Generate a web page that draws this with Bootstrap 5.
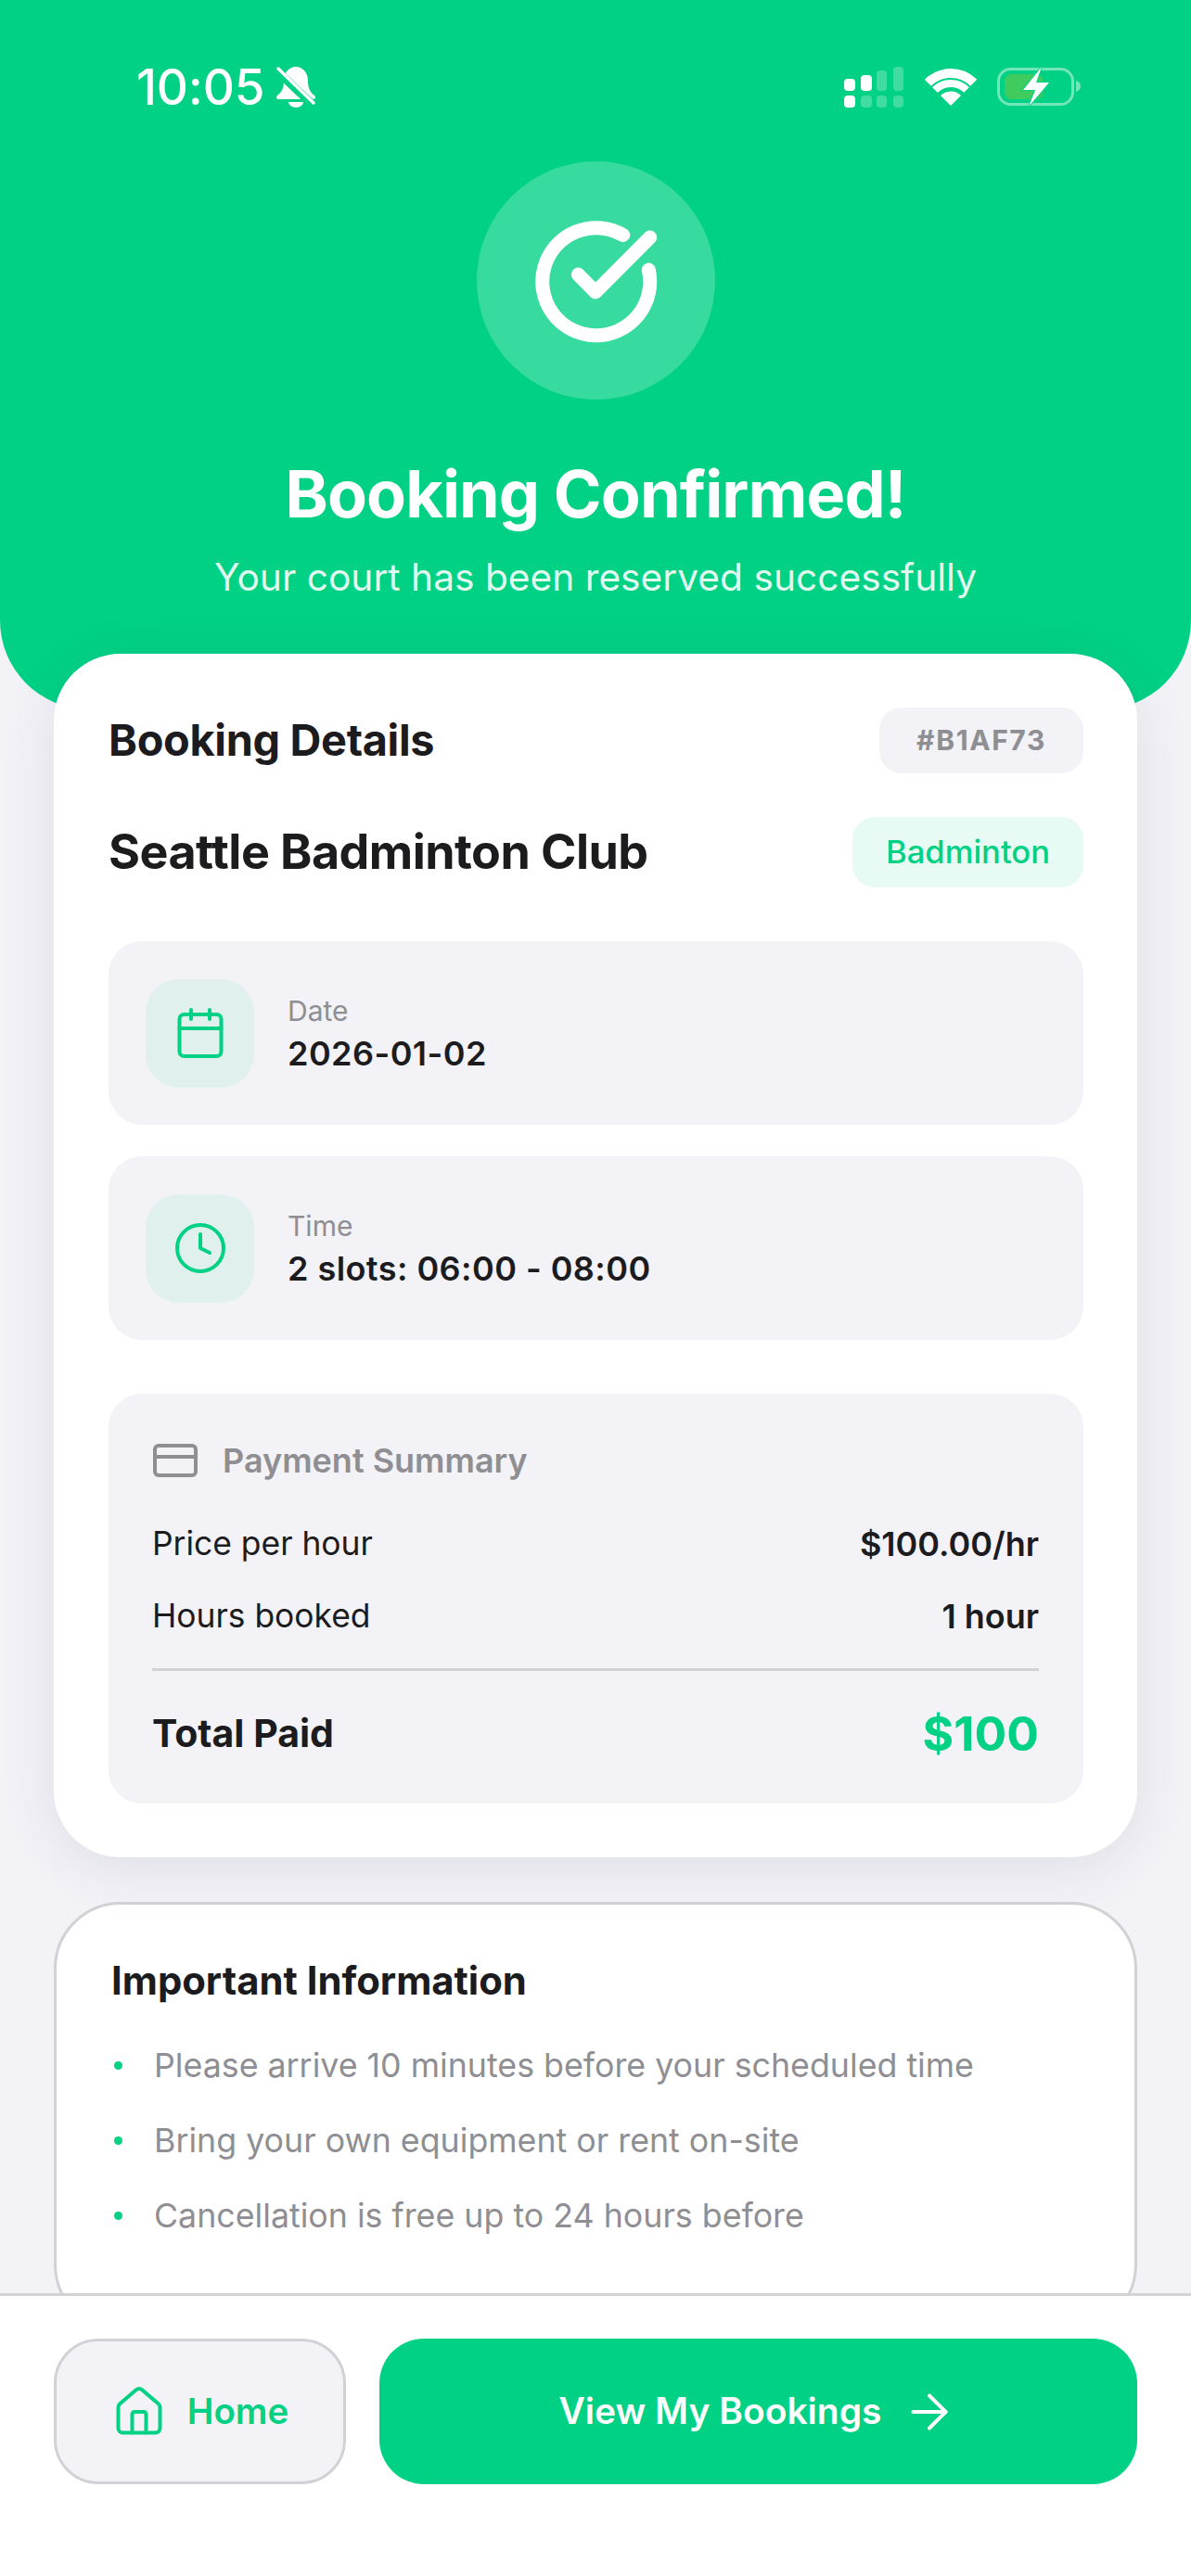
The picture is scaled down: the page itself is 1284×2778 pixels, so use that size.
<!DOCTYPE html>
<html lang="en">
<head>
<meta charset="utf-8">
<title>Booking Confirmed</title>
<link href="https://cdn.jsdelivr.net/npm/bootstrap@5.3.0/dist/css/bootstrap.min.css" rel="stylesheet">
<style>
:root{--g:#00D185;--ink:#1C1C1E;--mute:#8E8E93;--soft:#F2F2F7;--line:#D1D1D6}
html,body{height:100%}
body{font-family:Inter,"Liberation Sans",sans-serif;background:var(--soft);color:var(--ink);overflow:hidden}
.shell{height:2778px}
.scroller{min-height:0;overflow:hidden}
.hero{height:765px;background:var(--g);border-radius:0 0 96px 96px;color:#fff}
.statusline{height:132px;margin-top:28px;padding:0 117px 0 147px}
.clock-text{font-size:53px;font-weight:500;line-height:1;letter-spacing:-.2px}
.bell-ic{margin-left:12px}
.sig-gap{margin-left:22px}
.halo{width:257px;height:257px;margin-top:14px;background:rgba(255,255,255,.22)}
.hero-title{font-size:70.1px;font-weight:700;line-height:80px;margin:62px 0 0;letter-spacing:-.9px}
.hero-sub{font-size:40.7px;line-height:50px;margin:25px 0 0;color:rgba(255,255,255,.9)}
.outer{padding:0 58px}
.sheet{margin-top:-60px;border-radius:72px;padding:58px 58px 58px 59px;box-shadow:0 12px 60px rgba(60,60,90,.1);border:0}
.sheet-title{font-size:46.8px;font-weight:700;line-height:71px;margin:0;letter-spacing:-.3px}
.ref-tag{height:71px;width:220px;border-radius:24px;background:var(--soft);color:var(--mute);font-size:30px;font-weight:700;letter-spacing:1.6px}
.club-row{margin-top:47px}
.club-name{font-size:52px;font-weight:700;line-height:76px;margin:0;letter-spacing:-.55px}
.sport-tag{height:76px;width:249px;border-radius:24px;background:#E8FAF4;color:var(--g);font-size:34.6px;font-weight:500}
.fact{height:198px;border-radius:36px;background:var(--soft);padding:0 40px;gap:36px}
.fact-one{margin-top:58px}
.fact-two{margin-top:34px}
.fact-ic{width:117px;height:117px;border-radius:36px;background:#DFF0ED}
.fact-text{padding-top:3px}
.fact-label{font-size:30px;line-height:42px;color:var(--mute)}
.fact-val{font-size:36px;line-height:51px;font-weight:600;letter-spacing:.45px;color:var(--ink)}
.pay{margin-top:58px;height:442px;border-radius:36px;background:var(--soft);padding:47px 48px 47px 47px}
.pay-head{height:50px;gap:27px;color:var(--mute);font-size:36px;font-weight:600}
.pay-ic{margin-left:1px}
.pay-row{height:50px;font-size:35.4px;color:var(--ink)}
.pay-one{margin-top:40px}
.pay-two{margin-top:28px}
.pay-val{font-weight:600;font-size:36px}
.pay-rule{height:3px;margin-top:31px;background:var(--line)}
.pay-total{height:64px;margin-top:36px}
.total-label{font-size:41px;font-weight:700}
.total-val{font-size:51.5px;font-weight:700;color:var(--g)}
.notes{margin-top:48px;border:3px solid var(--line);border-radius:72px;padding:57px 58px 97px 59px}
.notes-title{font-size:41.8px;line-height:50px;font-weight:700;margin:0 0 41px}
.notes-list{display:flex;flex-direction:column;gap:31px;margin:0;padding:0;list-style:none}
.notes-list li{display:flex;align-items:center;gap:34px;font-size:35.75px;line-height:50px;color:var(--mute)}
.dot{flex:none;width:9px;height:9px;margin-left:3px;border-radius:50%;background:var(--g)}
.foot{height:305px;flex:none;border-top:3px solid var(--line);background:#fff;padding:46px 58px 0;gap:36px}
.btn.go-home{width:315px;height:157px;border:3px solid var(--line);border-radius:48px;background:var(--soft);color:var(--g);font-size:38.5px;font-weight:600;gap:22px}
.btn.go-list{height:157px;border:0;border-radius:48px;background:var(--g);color:#fff;font-size:39px;font-weight:600;gap:22px}
</style>
</head>
<body>
<div class="shell d-flex flex-column">
  <div class="scroller flex-grow-1">
    <header class="hero d-flex flex-column align-items-center">
      <div class="statusline w-100 d-flex align-items-center justify-content-between">
        <div class="d-flex align-items-center">
          <span class="clock-text">10:05</span>
          <svg class="bell-ic" width="44" height="46" viewBox="296 73 44 46" aria-hidden="true">
            <path fill="#fff" d="M318 74c-8 0-13 7-13 15 0 8-2 12-7 16-2 2-1 4 2 4h36c3 0 4-2 2-4-5-4-7-8-7-16 0-8-5-15-13-15z"/>
            <path fill="#fff" d="M310 112h16c0 3-4 6-8 6s-8-3-8-6z"/>
            <path stroke="#00D185" stroke-width="9" d="M296 77l40 38"/>
            <path stroke="#fff" stroke-width="3.5" stroke-linecap="round" d="M299 76l38 37"/>
          </svg>
        </div>
        <div class="d-flex align-items-center">
          <svg width="65" height="44" viewBox="911 72 65 44" aria-hidden="true">
            <g fill="#fff">
              <rect x="911" y="85" width="12" height="13" rx="4"/>
              <rect x="911" y="103" width="12" height="13" rx="4"/>
              <rect x="929" y="81" width="12" height="17" rx="4"/>
            </g>
            <g fill="#fff" fill-opacity=".25">
              <rect x="946" y="76" width="11" height="22" rx="4"/>
              <rect x="964" y="72" width="11" height="26" rx="4"/>
              <rect x="929" y="103" width="12" height="13" rx="4"/>
              <rect x="946" y="103" width="11" height="13" rx="4"/>
              <rect x="964" y="103" width="11" height="13" rx="4"/>
            </g>
          </svg>
          <svg class="sig-gap" width="56" height="40" viewBox="997 73 56 40" aria-hidden="true">
            <g fill="none" stroke="#fff">
              <path stroke-width="10" d="M1000.3 88.3a35 35 0 0 1 49.4 0"/>
              <path stroke-width="8" d="M1008 96a24 24 0 0 1 34 0"/>
            </g>
            <path fill="#fff" d="M1025 113l-11-11a16 16 0 0 1 22 0z"/>
          </svg>
          <svg class="sig-gap" width="92" height="48" viewBox="1075 70 92 48" aria-hidden="true">
            <rect x="1076.5" y="74.5" width="80" height="38" rx="13" fill="none" stroke="#fff" stroke-opacity=".45" stroke-width="3"/>
            <rect x="1083" y="80" width="42" height="27" rx="8" fill="#3FCB5E"/>
            <path d="M1160 87c3 1 5 3 5 6s-2 5-5 6z" fill="#fff" fill-opacity=".45"/>
            <path d="M1123 72l-20 25h13l-7 18 22-26h-14z" fill="#fff" stroke="#00D185" stroke-width="2" paint-order="stroke" stroke-linejoin="round"/>
          </svg>
        </div>
      </div>
      <div class="halo rounded-circle d-flex align-items-center justify-content-center">
        <svg width="144" height="144" viewBox="-72 -72 144 144" fill="none" stroke="#fff" stroke-width="15" stroke-linecap="round" stroke-linejoin="round" aria-hidden="true">
          <path d="M57.3-12A58 58 0 1 1 29.7-49.5"/>
          <path d="M-18.7-7L0 12 58.7-47"/>
        </svg>
      </div>
      <h1 class="hero-title">Booking Confirmed!</h1>
      <p class="hero-sub">Your court has been reserved successfully</p>
    </header>
    <main class="outer">
      <section class="card sheet position-relative">
        <div class="d-flex align-items-center justify-content-between">
          <h2 class="sheet-title">Booking Details</h2>
          <span class="ref-tag d-flex align-items-center justify-content-center">#B1AF73</span>
        </div>
        <div class="club-row d-flex align-items-center justify-content-between">
          <h3 class="club-name">Seattle Badminton Club</h3>
          <span class="sport-tag d-flex align-items-center justify-content-center">Badminton</span>
        </div>
        <div class="fact fact-one d-flex align-items-center">
          <div class="fact-ic d-flex align-items-center justify-content-center">
            <svg width="60" height="60" viewBox="0 0 24 24" fill="none" stroke="#00D185" stroke-width="1.6" stroke-linecap="round" stroke-linejoin="round" aria-hidden="true"><rect x="3" y="4" width="18" height="18" rx="2"/><path d="M16 2v4M8 2v4M3 10h18"/></svg>
          </div>
          <div class="fact-text">
            <div class="fact-label">Date</div>
            <div class="fact-val">2026-01-02</div>
          </div>
        </div>
        <div class="fact fact-two d-flex align-items-center">
          <div class="fact-ic d-flex align-items-center justify-content-center">
            <svg width="60" height="60" viewBox="0 0 24 24" fill="none" stroke="#00D185" stroke-width="1.6" stroke-linecap="round" stroke-linejoin="round" aria-hidden="true"><circle cx="12" cy="12" r="10"/><path d="M12 6v6l4 2"/></svg>
          </div>
          <div class="fact-text">
            <div class="fact-label">Time</div>
            <div class="fact-val">2 slots: 06:00 - 08:00</div>
          </div>
        </div>
        <div class="pay">
          <div class="pay-head d-flex align-items-center">
            <svg class="pay-ic" width="48" height="40" viewBox="0 2 24 20" fill="none" stroke="#8E8E93" stroke-width="2" stroke-linecap="round" stroke-linejoin="round" aria-hidden="true"><rect x="1" y="4" width="22" height="16" rx="2"/><path d="M1 10h22"/></svg>
            <span>Payment Summary</span>
          </div>
          <div class="pay-row pay-one d-flex align-items-center justify-content-between"><span>Price per hour</span><span class="pay-val">$100.00/hr</span></div>
          <div class="pay-row pay-two d-flex align-items-center justify-content-between"><span>Hours booked</span><span class="pay-val">1 hour</span></div>
          <div class="pay-rule"></div>
          <div class="pay-total d-flex align-items-center justify-content-between"><span class="total-label">Total Paid</span><span class="total-val">$100</span></div>
        </div>
      </section>
      <section class="notes bg-white">
        <h3 class="notes-title">Important Information</h3>
        <ul class="notes-list">
          <li><span class="dot"></span>Please arrive 10 minutes before your scheduled time</li>
          <li><span class="dot"></span>Bring your own equipment or rent on-site</li>
          <li><span class="dot"></span>Cancellation is free up to 24 hours before</li>
        </ul>
      </section>
    </main>
  </div>
  <footer class="foot d-flex align-items-start">
    <button type="button" class="btn go-home d-flex align-items-center justify-content-center">
      <svg width="60" height="60" viewBox="0 0 24 24" fill="none" stroke="#00D185" stroke-width="1.6" stroke-linecap="round" stroke-linejoin="round" aria-hidden="true"><path d="M15 21v-8a1 1 0 0 0-1-1h-4a1 1 0 0 0-1 1v8"/><path d="M3 10a2 2 0 0 1 .709-1.528l7-5.999a2 2 0 0 1 2.582 0l7 5.999A2 2 0 0 1 21 10v9a2 2 0 0 1-2 2H5a2 2 0 0 1-2-2z"/></svg>
      <span>Home</span>
    </button>
    <button type="button" class="btn go-list flex-grow-1 d-flex align-items-center justify-content-center">
      <span>View My Bookings</span>
      <svg width="60" height="60" viewBox="0 0 24 24" fill="none" stroke="#fff" stroke-width="1.6" stroke-linecap="round" stroke-linejoin="round" aria-hidden="true"><path d="M5 12h14"/><path d="m12 5 7 7-7 7"/></svg>
    </button>
  </footer>
</div>
<script src="https://cdn.jsdelivr.net/npm/bootstrap@5.3.0/dist/js/bootstrap.bundle.min.js"></script>
</body>
</html>
